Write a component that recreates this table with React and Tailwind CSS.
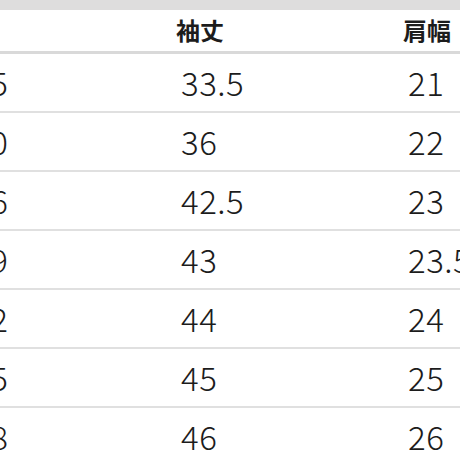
const rows = [
  ['35', '33.5', '21', '61'],
  ['40', '36', '22', '64'],
  ['46', '42.5', '23', '67'],
  ['49', '43', '23.5', '70'],
  ['52', '44', '24', '73'],
  ['55', '45', '25', '76'],
  ['58', '46', '26', '79'],
]

const font = { fontFamily: '"Noto Sans CJK JP", "Noto Sans", sans-serif' }

function App() {
  return (
    <div className="h-[460px] w-[460px] overflow-hidden bg-white text-[#1c1c1c]" style={font}>
      <div className="h-[10px] bg-[#dedddd]" />
      <div className="-ml-[33px] w-[900px]">
        <div className="grid h-[44px] grid-cols-[209px_227px_227px_227px] items-center border-b-[3px] border-[#d9d9d9] text-[24px] font-bold leading-none">
          <div className="-ml-[40px]">身幅</div>
          <div className="pb-[2px]">袖丈</div>
          <div className="pb-[2px]">肩幅</div>
          <div className="pb-[2px]">着丈</div>
        </div>
        {rows.map((row) => (
          <div
            key={row[0]}
            className="grid h-[59px] grid-cols-[209px_227px_227px_227px] items-center border-b-2 border-[#e0e0e0] text-[33px] font-light tracking-[0.5px]"
          >
            {row.map((cell, i) => (
              <div key={i} className="pl-[5px]">
                {cell}
              </div>
            ))}
          </div>
        ))}
      </div>
    </div>
  )
}

export default App
